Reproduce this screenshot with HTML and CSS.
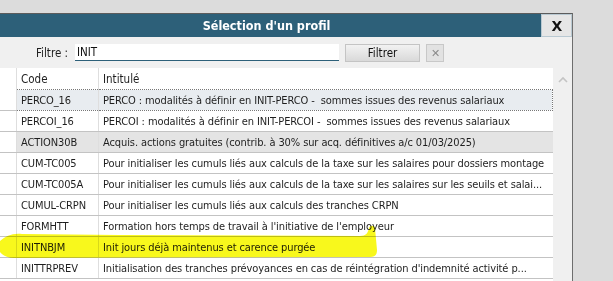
FILE: index.html
```html
<!DOCTYPE html>
<html lang="fr">
<head>
    <meta charset="UTF-8">
    <title>Sélection d'un profil</title>
    <link rel="stylesheet" href="styles.css">
</head>
<body>
    <div class="dialog">
        <div class="titlebar">
            <div class="title">Sélection d'un profil</div>
            <button class="close-btn">X</button>
        </div>

        <div class="toolbar">
            <label for="filtre">Filtre :</label>
            <input type="text" id="filtre" value="INIT">
            <button class="filter-btn">Filtrer</button>
            <button class="clear-btn">&#x2715;</button>
        </div>

        <div class="content">
            <div class="grid">
                <table>
                    <tr>
                        <th class="sel"></th>
                        <th class="code">Code</th>
                        <th>Intitulé</th>
                    </tr>
                    <tr class="current">
                        <td class="sel"></td>
                        <td>PERCO_16</td>
                        <td>PERCO : modalités à définir en INIT-PERCO - &nbsp;sommes issues des revenus salariaux</td>
                    </tr>
                    <tr>
                        <td class="sel"></td>
                        <td>PERCOI_16</td>
                        <td>PERCOI : modalités à définir en INIT-PERCOI - &nbsp;sommes issues des revenus salariaux</td>
                    </tr>
                    <tr class="grey">
                        <td class="sel"></td>
                        <td>ACTION30B</td>
                        <td>Acquis. actions gratuites (contrib. à 30% sur acq. définitives a/c 01/03/2025)</td>
                    </tr>
                    <tr>
                        <td class="sel"></td>
                        <td>CUM-TC005</td>
                        <td>Pour initialiser les cumuls liés aux calculs de la taxe sur les salaires pour dossiers montage</td>
                    </tr>
                    <tr>
                        <td class="sel"></td>
                        <td>CUM-TC005A</td>
                        <td>Pour initialiser les cumuls liés aux calculs de la taxe sur les salaires sur les seuils et salai...</td>
                    </tr>
                    <tr>
                        <td class="sel"></td>
                        <td>CUMUL-CRPN</td>
                        <td>Pour initialiser les cumuls liés aux calculs des tranches CRPN</td>
                    </tr>
                    <tr>
                        <td class="sel"></td>
                        <td>FORMHTT</td>
                        <td>Formation hors temps de travail à l'initiative de l'employeur</td>
                    </tr>
                    <tr>
                        <td class="sel"></td>
                        <td>INITNBJM</td>
                        <td>Init jours déjà maintenus et carence purgée</td>
                    </tr>
                    <tr>
                        <td class="sel"></td>
                        <td>INITTRPREV</td>
                        <td>Initialisation des tranches prévoyances en cas de réintégration d'indemnité activité p...</td>
                    </tr>
                </table>
            </div>
            <div class="scrollbar">
                <svg width="12" height="8" viewBox="0 0 12 8">
                    <path d="M2 6 L6 2 L10 6" fill="none" stroke="#c4c4c4" stroke-width="1.6"/>
                </svg>
            </div>
        </div>
    </div>

    <!-- surlignage au feutre -->
    <svg class="highlight" width="613" height="281" viewBox="0 0 613 281">
        <path d="M0 241 C6 236 12 233 22 234 L120 235 L360 236 C366 236 368 233 369 228
                 C370 225 374 225 375 228 L377 250 C377 255 375 257 370 257
                 L14 258 C7 258 2 255 0 252 Z" fill="#f8f81c"/>
    </svg>
</body>
</html>
```

FILE: styles.css
```css
body {
    margin: 0;
    background: #dcdcdc;
    font-family: 'DejaVu Sans Condensed', 'DejaVu Sans', sans-serif;
    font-size: 11px;
    color: #1e1e1e;
    overflow: hidden;
    height: 281px;
}
.dialog {
    margin-top: 13px;
    width: 572px;
    height: 268px;
    border-top: 1px solid #5c5c5c;
    border-right: 1px solid #6e6e6e;
    background: #f0f0f0;
    display: flex;
    flex-direction: column;
}
.titlebar {
    height: 23px;
    background: #2d6079;
    display: flex;
    align-items: stretch;
}
.title {
    flex: 1;
    text-align: center;
    color: white;
    font-weight: bold;
    font-size: 12.5px;
    line-height: 23px;
    padding-right: 8px;
}
.close-btn {
    width: 31px;
    margin: 0;
    border: 1px solid #b9c9d2;
    background: #e6e6e6;
    font-family: 'DejaVu Sans', sans-serif;
    font-weight: bold;
    font-size: 14px;
    color: #111;
    padding: 0 0 0 1px;
}
.toolbar {
    height: 31px;
    display: flex;
    align-items: center;
    padding-left: 36px;
}
.toolbar label {
    font-size: 11.5px;
    width: 39px;
}
.toolbar input {
    width: 264px;
    height: 17px;
    box-sizing: border-box;
    border: none;
    border-bottom: 1px solid #2d6079;
    background: white;
    font-family: 'DejaVu Sans Condensed', sans-serif;
    font-size: 11.5px;
    padding: 0 2px;
    color: #111;
}
.filter-btn {
    margin-left: 6px;
    width: 75px;
    height: 18px;
    border: 1px solid #c4c4c4;
    background: linear-gradient(to bottom, #f2f2f2, #d9d9d9);
    font-family: 'DejaVu Sans Condensed', sans-serif;
    font-size: 11.5px;
    color: #111;
    padding: 0;
}
.clear-btn {
    margin-left: 6px;
    width: 18px;
    height: 18px;
    border: 1px solid #c8c8c8;
    background: #e2e2e2;
    color: #8a8a8a;
    font-size: 11px;
    padding: 0;
    line-height: 16px;
}
.content {
    flex: 1;
    display: flex;
}
.grid {
    width: 553px;
    background: white;
}
.scrollbar {
    flex: 1;
    display: flex;
    justify-content: center;
    padding-top: 8px;
}
.scrollbar svg {
    display: block;
}
table {
    width: 100%;
    border-collapse: collapse;
    table-layout: fixed;
}
th, td {
    height: 20px;
    padding: 0 0 0 4px;
    text-align: left;
    white-space: nowrap;
    overflow: hidden;
    letter-spacing: -0.1px;
    border-bottom: 1px solid #c3c3c3;
    border-left: 1px solid #dedede;
}
th {
    height: 21px;
    font-weight: normal;
    font-size: 11.5px;
    letter-spacing: 0;
    border-bottom: none;
}
.sel {
    width: 12px;
    border-left: none;
}
th.code {
    width: 77px;
}
tr.current td {
    background: #e8ecf0;
    border-top: 1px dotted #777;
    border-bottom: 1px dotted #777;
}
tr.current td:first-child {
    background: white;
    border-top: none;
    border-bottom: 1px solid #c3c3c3;
}
tr.current td:last-child {
    border-right: 1px dotted #777;
}
tr.grey td {
    background: #e4e4e4;
}
tr.grey td:first-child {
    background: white;
}
.highlight {
    position: absolute;
    top: 0;
    left: 0;
    mix-blend-mode: multiply;
    pointer-events: none;
}
```
